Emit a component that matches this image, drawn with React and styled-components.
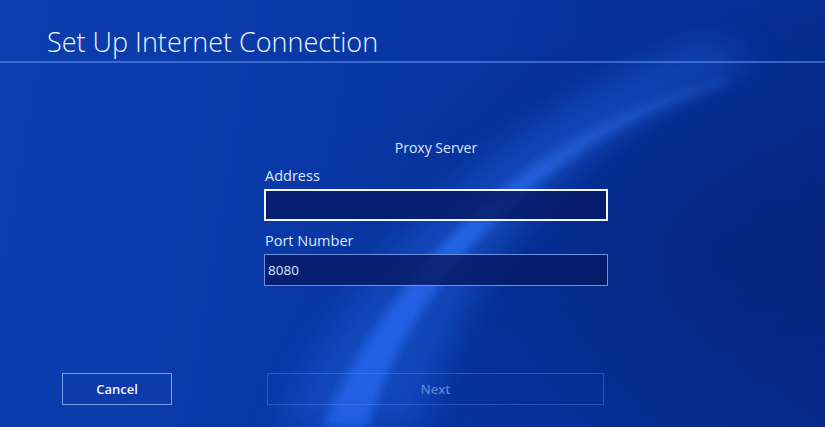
import React from 'react';
import styled, { createGlobalStyle } from 'styled-components';

const GlobalStyle = createGlobalStyle`
  html, body {
    margin: 0;
    padding: 0;
    background: #0735a0;
  }
  * {
    box-sizing: border-box;
  }
`;

const Screen = styled.div`
  position: relative;
  width: 825px;
  height: 427px;
  overflow: hidden;
  display: flex;
  flex-direction: column;
  font-family: "Open Sans", "Noto Sans", sans-serif;
  color: #e6eeff;
  background: linear-gradient(100deg, #0b3eae 0%, #0838a6 40%, #0632a0 65%, #062b8e 100%);
`;

const Backdrop = styled.svg`
  position: absolute;
  inset: 0;
  width: 100%;
  height: 100%;
  z-index: 0;
  pointer-events: none;
`;

const Header = styled.header`
  position: relative;
  z-index: 1;
  height: 63px;
  padding: 25px 0 0 47px;
  border-bottom: 2px solid rgba(90, 140, 235, 0.6);
`;

const Title = styled.h1`
  margin: 0;
  font-size: 27px;
  font-weight: 300;
  line-height: 34px;
  color: #eef3ff;
`;

const Body = styled.main`
  position: relative;
  z-index: 1;
  flex: 1;
  display: flex;
  flex-direction: column;
  padding: 75px 0 0 264px;
`;

const Form = styled.section`
  width: 344px;
  display: flex;
  flex-direction: column;
`;

const Caption = styled.div`
  text-align: center;
  font-size: 14px;
  line-height: 20px;
  color: #dfe8ff;
  margin-bottom: 8px;
`;

const Label = styled.div`
  font-size: 14.5px;
  line-height: 20px;
  color: #dfe8ff;
  padding-left: 1px;
  margin-bottom: 3px;
`;

const Field = styled.div`
  height: 32px;
  margin-bottom: ${(p) => p.$gap || 0}px;
  display: flex;
  align-items: center;
  padding-left: 3px;
  font-size: 13.5px;
  color: #dfe8ff;
  background: rgba(6, 26, 100, 0.82);
  border: ${(p) => (p.$focused ? '2px solid #f2f5ff' : '1px solid rgba(130, 165, 240, 0.85)')};
`;

const Footer = styled.footer`
  position: relative;
  z-index: 1;
  display: flex;
  gap: 95px;
  padding: 0 0 22px 62px;
`;

const Button = styled.button`
  width: ${(p) => p.$width}px;
  height: 32px;
  padding: 0;
  font-family: "Open Sans", "Noto Sans", sans-serif;
  font-size: 13px;
  font-weight: 600;
  background: ${(p) => (p.$disabled ? 'transparent' : 'rgba(20, 60, 170, 0.35)')};
  color: ${(p) => (p.$disabled ? 'rgba(120, 150, 230, 0.75)' : '#f0f4ff')};
  border: 1px solid ${(p) => (p.$disabled ? 'rgba(100, 140, 230, 0.4)' : 'rgba(130, 170, 245, 0.9)')};
  cursor: default;
`;

const Wave = () => (
  <Backdrop viewBox="0 0 825 427" preserveAspectRatio="none">
    <defs>
      <filter id="soft" x="-20%" y="-20%" width="140%" height="140%">
        <feGaussianBlur stdDeviation="16" />
      </filter>
      <filter id="glow" x="-20%" y="-20%" width="140%" height="140%">
        <feGaussianBlur stdDeviation="5" />
      </filter>
      <linearGradient id="stripe" x1="0" y1="1" x2="1" y2="0">
        <stop offset="0%" stopColor="#2466f0" stopOpacity="0.75" />
        <stop offset="45%" stopColor="#2a6cf0" stopOpacity="0.75" />
        <stop offset="100%" stopColor="#3b7af0" stopOpacity="0.2" />
      </linearGradient>
      <radialGradient id="shade" cx="0.95" cy="0.6" r="0.6">
        <stop offset="0%" stopColor="#04206e" stopOpacity="0.55" />
        <stop offset="100%" stopColor="#04206e" stopOpacity="0" />
      </radialGradient>
    </defs>
    <rect x="0" y="0" width="825" height="427" fill="url(#shade)" />
    <path
      d="M280 427 C350 270 470 140 640 66 L700 40 L760 60 C600 120 480 230 420 427 Z"
      fill="#1c5ad4"
      opacity="0.5"
      filter="url(#soft)"
    />
    <path
      d="M322 427 C372 310 470 190 600 125 C650 100 690 86 725 78 L728 85 C690 96 650 112 610 135 C490 205 402 310 368 427 Z"
      fill="url(#stripe)"
      filter="url(#glow)"
    />
  </Backdrop>
);

export default function App() {
  return (
    <>
      <GlobalStyle />
      <Screen>
        <Wave />
        <Header>
          <Title>Set Up Internet Connection</Title>
        </Header>
        <Body>
          <Form>
            <Caption>Proxy Server</Caption>
            <Label>Address</Label>
            <Field $focused $gap={10} />
            <Label>Port Number</Label>
            <Field>8080</Field>
          </Form>
        </Body>
        <Footer>
          <Button $width={110}>Cancel</Button>
          <Button $width={337} $disabled>Next</Button>
        </Footer>
      </Screen>
    </>
  );
}
